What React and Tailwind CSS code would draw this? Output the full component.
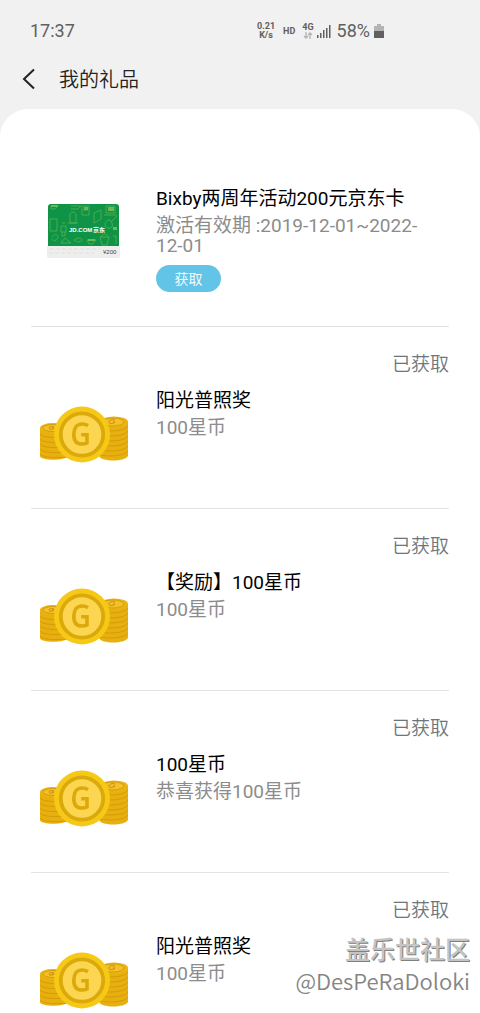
import React from "react";

const gifts = [
  {
    id: 1,
    type: "card",
    title: "Bixby两周年活动200元京东卡",
    detail: "激活有效期 :2019-12-01~2022-12-01",
    claimed: false,
  },
  { id: 2, type: "coins", title: "阳光普照奖", detail: "100星币", claimed: true },
  { id: 3, type: "coins", title: "【奖励】100星币", detail: "100星币", claimed: true },
  { id: 4, type: "coins", title: "100星币", detail: "恭喜获得100星币", claimed: true },
  { id: 5, type: "coins", title: "阳光普照奖", detail: "100星币", claimed: true },
];

const CoinsPicture = () => (
  <svg className="w-[90px] h-[60px] shrink-0" viewBox="0 0 90 60" aria-hidden="true">
    {/* left stack */}
    <path d="M1 23v28c0 5 26 5 28 0V23z" fill="#e8b00f" />
    <path
      d="M1 29c3 4 16 4 28 3M1 34c3 4 16 4 28 3M1 39c3 4 16 4 28 3M1 44c3 4 16 4 28 3M1 49c3 4 16 4 28 3"
      fill="none"
      stroke="#cf9609"
      strokeWidth="0.8"
    />
    <ellipse cx="14" cy="23" rx="13" ry="5" fill="#eab412" />
    <ellipse cx="14" cy="23" rx="10" ry="3.5" fill="#f3c02a" stroke="#cf9609" strokeWidth="0.8" />
    <path d="M15 22c-3-1-5 0-5 1s3 2 5 0h-2" fill="none" stroke="#c98f08" strokeWidth="1" />
    {/* right stack */}
    <path d="M60 17v34c2 6 26 6 29 0V17z" fill="#e8b00f" />
    <path
      d="M60 25c12 2 26 1 29-4M60 30c12 2 26 1 29-4M60 35c12 2 26 1 29-4M60 40c12 2 26 1 29-4M60 45c12 2 26 1 29-4M60 50c12 2 26 1 29-4"
      fill="none"
      stroke="#cf9609"
      strokeWidth="0.8"
    />
    <ellipse cx="75" cy="17" rx="14" ry="5.5" fill="#eab412" />
    <ellipse cx="74" cy="17" rx="11" ry="4" fill="#f3c02a" stroke="#cf9609" strokeWidth="0.8" />
    <path d="M76 15c-3-1-6 0-6 2s4 2 6 0h-2" fill="none" stroke="#c98f08" strokeWidth="1" />
    {/* front coin */}
    <circle cx="43" cy="29.5" r="28" fill="#f5c916" />
    <circle cx="43" cy="29.5" r="21.2" fill="#fcd651" stroke="#dba90c" strokeWidth="3.8" />
    <path
      d="M49 20.600c-2-1.200-4-1.600-5.800-1.600-5.600 0-8.400 4.200-8.400 10.200s2.600 9.800 7.900 9.800c2.200 0 4.200-.400 5.300-1v-8.200h-5.800"
      fill="none"
      stroke="#dba90c"
      strokeWidth="3.600"
    />
  </svg>
);

const CardPicture = () => (
  <svg className="w-[90px] h-[60px] shrink-0" viewBox="0 0 90 60" aria-hidden="true">
    <path d="M9 6a3 3 0 0 1 3-3h65a3 3 0 0 1 3 3v40H9z" fill="#0f9447" />
    <g fill="none" stroke="#4fae50" strokeWidth="0.9">
      <path d="M12 5h7l-3 3h-4zM32 5h10l-3 3h-7M11 18h7v12h-7zM31 22v-8c0-4 6-4 6 0v8zM29 22h10" />
      <path d="M43 5h7v9h-7zM44 9h5M55 12l7-3v9l-7 4zM67 5h9v7h-9zM65 14h13M22 25h5v6h-5zM23 22h3M23 31v4h3v-4" />
      <path d="M78 15l-6 6M71 19c-5-1-7 8-2 8 5 1 6-4 2-8M13 36c2-3 6-3 6 0s-5 5-6 2M22 42l4-5 6 5zM35 39c4-3 8-2 8 0s-5 3-8 0M48 39h9l-4 4h-3zM61 36h9l-2 8h-5zM62 36c1-4 6-4 7 0M77 34v9M74 34l3 3" />
    </g>
    <path d="M12 4h7v2h-7zM45 6h4v3h-4zM69 6h6v4h-6zM74 26h4v3h-4zM49 38h7v2h-7z" fill="#6cba55" />
    <path d="M8 45h73v10a2 2 0 0 1-2 2H10a2 2 0 0 1-2-2z" fill="#eeeeec" />
    <path d="M11 48h50M10 52h45" stroke="#e0e0de" strokeWidth="1" strokeDasharray="4 2" />
    <g fill="#fff" fontSize="6" fontWeight="700" fontFamily="'Liberation Sans', 'Noto Sans CJK SC', sans-serif">
      <text x="30" y="31">JD.COM</text>
      <text x="54" y="31">京东</text>
    </g>
    <text x="64" y="53" fontSize="6" fill="#444" fontFamily="'Liberation Sans', sans-serif">
      ¥200
    </text>
  </svg>
);

const StatusBar = () => (
  <div className="flex h-[61px] shrink-0 items-center pl-[30px] pr-24 font-normal text-[#606060]">
    <time className="text-[18px] leading-5">17:37</time>
    <div className="ml-auto flex items-center">
      <div className="text-center text-[9px] font-bold leading-[9px]">
        <div>0.21</div>
        <div>K/s</div>
      </div>
      <span className="ml-2 text-[9px] font-bold leading-[10px]">HD</span>
      <div className="ml-[7px] flex flex-col items-center">
        <span className="text-[9px] font-bold leading-[9px]">4G</span>
        <svg className="h-[7px] w-[10px]" viewBox="0 0 10 7" fill="none" stroke="#b4b4b4" strokeWidth="1.300">
          <path d="M3 0v6M1 4l2 2 2-2M7 7V1M5 3l2-2 2 2" />
        </svg>
      </div>
      <svg className="ml-[3px] h-[14px] w-[14px]" viewBox="0 0 14 14" fill="#606060">
        <path d="M0 11h1.500v3H0zM3 9h1.500v5H3zM6 6h1.500v8H6zM9 4h1.500v10H9zM12 1h1.500v13H12z" />
      </svg>
      <span className="ml-1.5 text-[18px] leading-5">58%</span>
      <svg className="ml-1 h-[14px] w-[10px]" viewBox="0 0 10 14">
        <path d="M3 0h4v2h3v5H0V2h3z" fill="#b4b4b4" />
        <path d="M0 7h10v7H0z" fill="#606060" />
      </svg>
    </div>
  </div>
);

const GiftRow = ({ gift }) => (
  <li className={`border-b border-[#e3e3e3] ${gift.claimed ? "h-[182px] pt-[26px]" : "pt-[77px] pb-[34px]"}`}>
    {gift.claimed && <p className="text-right text-[19px] leading-6 text-[#6c767c]">已获取</p>}
    <div className={`flex gap-[27px] pl-2 ${gift.claimed ? "pt-3" : ""}`}>
      <div className={gift.claimed ? "pt-4" : "pt-[14px]"}>
        {gift.type === "card" ? <CardPicture /> : <CoinsPicture />}
      </div>
      <div className="min-w-0 flex-1 pr-4">
        <h2 className="text-[19px] font-normal leading-6 text-black">{gift.title}</h2>
        <p className="mt-[5px] text-[19px] font-normal leading-5 text-[#8c8c8c]">{gift.detail}</p>
        {!gift.claimed && (
          <button
            type="button"
            className="mt-[9px] block h-[27px] w-[65px] rounded-full bg-[#62c5e8] text-[14px] leading-5 text-white"
          >
            获取
          </button>
        )}
      </div>
    </div>
  </li>
);

const App = () => {
  return (
    <div className="relative flex h-screen flex-col overflow-hidden bg-[#f1f1f1] font-['Roboto','Noto_Sans_CJK_SC',sans-serif] font-[350]">
      <StatusBar />
      <header className="flex h-12 shrink-0 items-start pl-[21px] pt-1">
        <button type="button" aria-label="返回" className="flex h-[28px] w-4 items-center text-[#222222]">
          <svg className="h-[22px] w-4" viewBox="0 0 16 22" fill="none" stroke="currentColor" strokeWidth="2">
            <path d="M13 1.500L3 11l10 9.500" />
          </svg>
        </button>
        <h1 className="ml-[22px] text-[20px] leading-[30px] text-[#222222]">我的礼品</h1>
      </header>
      <main className="min-h-0 flex-1 overflow-hidden rounded-t-[28px] bg-white px-[31px]">
        <ul className="pt-px">
          {gifts.map((gift) => (
            <GiftRow key={gift.id} gift={gift} />
          ))}
        </ul>
      </main>
      <div className="absolute bottom-[17px] right-[10px] text-right font-['Noto_Sans_CJK_SC',sans-serif]">
        <div className="text-[25px] font-medium leading-8 text-[#c4c4c4] [text-shadow:1px_1px_0_#808080]">
          盖乐世社区
        </div>
        <div className="text-[22px] leading-8 text-[#858585]">@DesPeRaDoloki</div>
      </div>
    </div>
  );
};

export default App;
